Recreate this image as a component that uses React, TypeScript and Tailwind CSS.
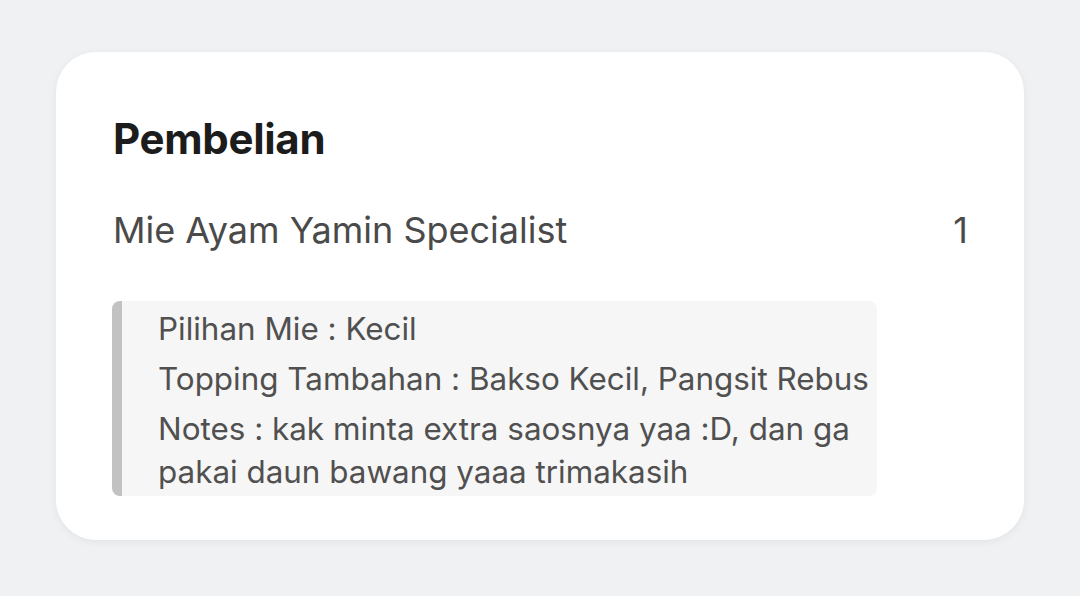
export default function App() {
  return (
    <div
      className="min-h-[596px] w-[1080px] bg-[#f0f1f3] pt-[52px] pl-[56px] [font-feature-settings:'calt'_0]"
      style={{ fontFamily: "Inter, 'Noto Sans', sans-serif" }}
    >
      <div className="w-[968px] h-[488px] rounded-[40px] bg-white shadow-[0_2px_8px_rgba(0,0,0,0.06)] pt-[62px] pl-[57px] pr-[56px]">
        <h1 className="text-[42px] leading-[50px] font-bold text-[#1c1c1c] tracking-[-0.3px]">
          Pembelian
        </h1>
        <div className="mt-[44px] flex justify-between items-start text-[36px] leading-[44px] text-[#4a4a4a]">
          <span>Mie Ayam Yamin Specialist</span>
          <span>1</span>
        </div>
        <div className="mt-[49px] -ml-[1px] w-[765px] rounded-[8px] bg-[#f6f6f6] border-l-[10px] border-[#c2c2c2] pl-[36px] pr-[2px] pt-[7px] pb-[2px] flex flex-col gap-[7px] text-[31.4px] leading-[43px] text-[#505050]">
          <p>Pilihan Mie : Kecil</p>
          <p className="whitespace-nowrap">Topping Tambahan : Bakso Kecil, Pangsit Rebus</p>
          <p>Notes : kak minta extra saosnya yaa :D, dan ga pakai daun bawang yaaa trimakasih</p>
        </div>
      </div>
    </div>
  );
}
